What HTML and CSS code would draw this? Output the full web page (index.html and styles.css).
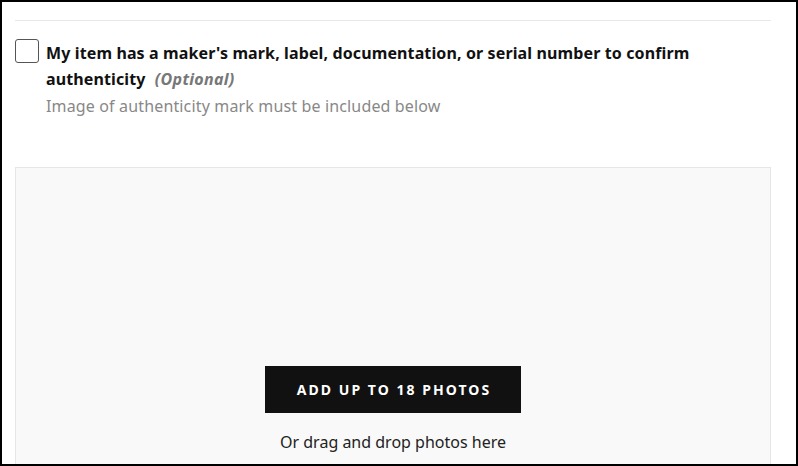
FILE: index.html
```html
<!DOCTYPE html>
<html>
<head>
<meta charset="utf-8">
<link rel="stylesheet" href="styles.css">
</head>
<body>
<div class="frame">
  <div class="content">
    <div class="divider"></div>
    <label class="check-row">
      <span class="checkbox"></span>
      <span class="check-text">
        <span class="check-title">My item has a maker's mark, label, documentation, or serial number to confirm authenticity <em class="optional">(Optional)</em></span>
        <span class="check-sub">Image of authenticity mark must be included below</span>
      </span>
    </label>
    <div class="upload">
      <button class="upload-btn">ADD UP TO 18 PHOTOS</button>
      <div class="upload-hint">Or drag and drop photos here</div>
    </div>
  </div>
</div>
</body>
</html>
```
FILE: styles.css
```css
html, body {
  margin: 0;
  padding: 0;
  background: #fff;
}
.frame {
  width: 798px;
  height: 466px;
  box-sizing: border-box;
  border: 2px solid #000;
  overflow: hidden;
  background: #fff;
}
.content {
  padding: 18px 25px 0 13px;
}
.divider {
  height: 1px;
  background: #e8e8e8;
}
.check-row {
  display: flex;
  gap: 7px;
  margin-top: 18px;
  align-items: flex-start;
}
.checkbox {
  flex: none;
  width: 22px;
  height: 22px;
  border: 1px solid #555;
  border-radius: 3px;
  background: #fff;
}
.check-text {
  display: flex;
  flex-direction: column;
  margin-top: 1px;
}
.check-title {
  font-family: "Noto Sans", sans-serif;
  font-weight: 700;
  font-size: 16px;
  line-height: 26px;
  letter-spacing: 0.12px;
  color: #111;
}
.optional {
  font-style: italic;
  color: #777;
  margin-left: 5px;
  letter-spacing: 0.3px;
}
.check-sub {
  font-family: "Noto Sans", sans-serif;
  font-size: 16px;
  line-height: 24px;
  letter-spacing: 0.15px;
  color: #888;
  margin-top: 2px;
}
.upload {
  margin-top: 49px;
  height: 320px;
  background: #f9f9f9;
  border: 1px solid #e6e6e6;
  display: flex;
  flex-direction: column;
  align-items: center;
  padding-top: 198px;
  box-sizing: border-box;
}
.upload-btn {
  width: 256px;
  height: 47px;
  background: #111;
  color: #fff;
  border: none;
  font-family: "Noto Sans", sans-serif;
  font-weight: 700;
  font-size: 14px;
  letter-spacing: 2.05px;
  padding: 0 0 0 2px;
}
.upload-hint {
  margin-top: 18px;
  font-family: "Noto Sans", sans-serif;
  font-size: 16px;
  color: #222;
}
```
